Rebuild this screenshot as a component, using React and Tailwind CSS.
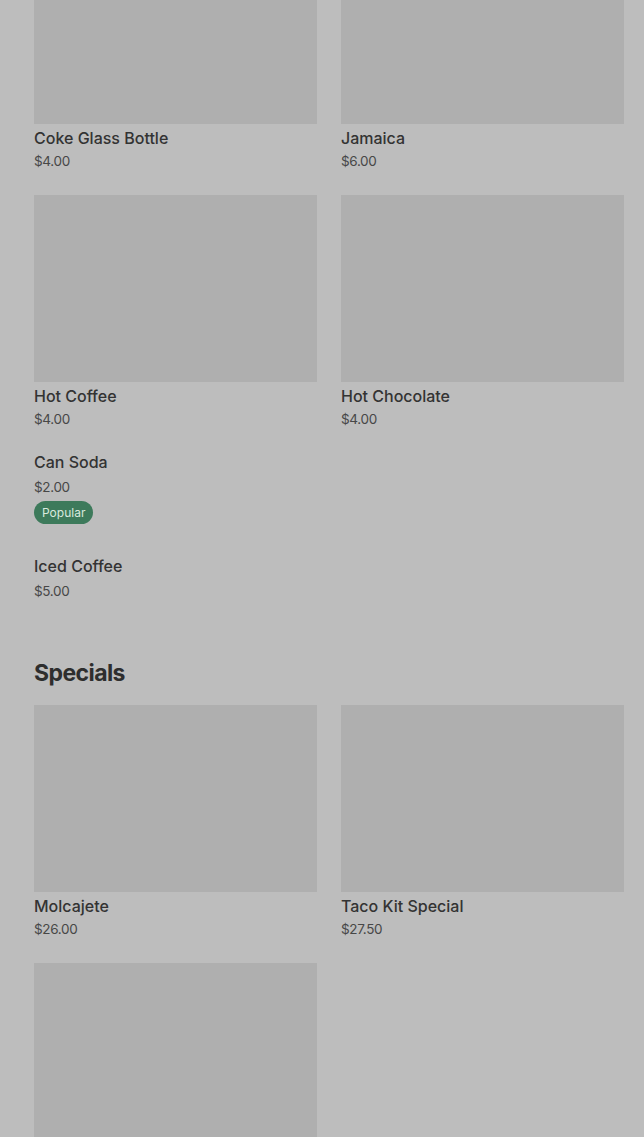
function Card({ name, price }) {
  return (
    <div className="flex flex-col">
      <div className="h-[187px] w-full bg-[#afafaf]" />
      {name && (
        <>
          <div className="mt-0.5 text-[16px] leading-6 font-medium text-[#333333]">{name}</div>
          <div className="mt-px text-[13.5px] leading-5 tracking-tight text-[#474747]">{price}</div>
        </>
      )}
    </div>
  );
}

function ListItem({ name, price, badge }) {
  return (
    <div className="flex flex-col items-start">
      <div className="text-[16px] leading-6 font-medium text-[#333333]">{name}</div>
      <div className="mt-[3px] text-[13.5px] leading-5 tracking-tight text-[#474747]">{price}</div>
      {badge && (
        <span className="mt-1 inline-flex h-[23px] items-center rounded-full bg-[#3d7a5b] px-2 text-[12px] text-[#d9e9de]">
          {badge}
        </span>
      )}
    </div>
  );
}

export default function App() {
  return (
    <div className="h-screen overflow-hidden bg-[#bdbdbd] font-['Inter','Liberation_Sans',sans-serif]">
      <div className="-mt-[63px] pl-[34px] pr-[20px]">
        <div className="grid grid-cols-2 gap-x-6 gap-y-6">
          <Card name="Coke Glass Bottle" price="$4.00" />
          <Card name="Jamaica" price="$6.00" />
          <Card name="Hot Coffee" price="$4.00" />
          <Card name="Hot Chocolate" price="$4.00" />
        </div>

        <div className="mt-[21px] flex flex-col gap-[30px]">
          <ListItem name="Can Soda" price="$2.00" badge="Popular" />
          <ListItem name="Iced Coffee" price="$5.00" />
        </div>

        <h2 className="mt-[56px] text-[23px] leading-8 font-bold tracking-tight text-[#2e2e2e]">Specials</h2>

        <div className="mt-[16px] grid grid-cols-2 gap-x-6 gap-y-6">
          <Card name="Molcajete" price="$26.00" />
          <Card name="Taco Kit Special" price="$27.50" />
          <Card />
        </div>
      </div>
    </div>
  );
}
